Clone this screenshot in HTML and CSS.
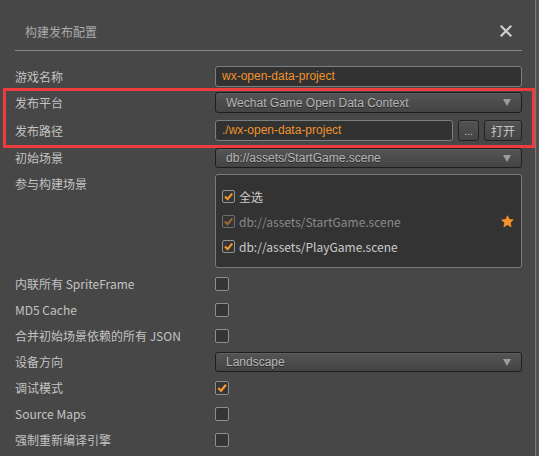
FILE: index.html
```html
<!DOCTYPE html>
<html lang="zh-CN">
<head>
<meta charset="utf-8">
<title>构建发布配置</title>
<link rel="stylesheet" href="styles.css">
</head>
<body>
<div class="window">
  <div class="titlebar">
    <span class="title">构建发布配置</span>
    <span class="close" aria-label="close">
      <svg width="12" height="12" viewBox="0 0 12 12"><path d="M1.5 1.5 L10.5 10.5 M10.5 1.5 L1.5 10.5" stroke="#cfcfcf" stroke-width="2.2" stroke-linecap="square"/></svg>
    </span>
  </div>
  <div class="sep"></div>

  <div class="form">
    <div class="row mt15">
      <span class="lbl">游戏名称</span>
      <div class="input">wx-open-data-project</div>
    </div>
    <div class="row mt5">
      <span class="lbl">发布平台</span>
      <div class="select"><span>Wechat Game Open Data Context</span><i class="arrow"></i></div>
    </div>
    <div class="row mt7">
      <span class="lbl">发布路径</span>
      <div class="pathctl">
        <div class="input grow">./wx-open-data-project</div>
        <div class="btn dots">...</div>
        <div class="btn open">打开</div>
      </div>
    </div>
    <div class="row mt7">
      <span class="lbl">初始场景</span>
      <div class="select h20"><span>db://assets/StartGame.scene</span><i class="arrow"></i></div>
    </div>
    <div class="row mt6 top">
      <span class="lbl lbl-top">参与构建场景</span>
      <div class="scenes">
        <div class="scene">
          <span class="cb"><svg width="11" height="11" viewBox="0 0 11 11"><polyline points="2,5.5 4.6,8.2 9.2,2.6" fill="none" stroke="#f3962c" stroke-width="2.2"/></svg></span>
          <span class="scene-name">全选</span>
        </div>
        <div class="scene dim">
          <span class="cb"><svg width="11" height="11" viewBox="0 0 11 11"><polyline points="2,5.5 4.6,8.2 9.2,2.6" fill="none" stroke="#9c6a33" stroke-width="2.2"/></svg></span>
          <span class="scene-name">db://assets/StartGame.scene</span>
          <svg class="star" width="13" height="13" viewBox="0 0 24 24"><polygon points="12,1.5 15.2,8.3 22.6,9.1 17.1,14.2 18.6,21.6 12,17.8 5.4,21.6 6.9,14.2 1.4,9.1 8.8,8.3" fill="#f6922a" stroke="#f6922a" stroke-width="1.5" stroke-linejoin="round"/></svg>
        </div>
        <div class="scene">
          <span class="cb"><svg width="11" height="11" viewBox="0 0 11 11"><polyline points="2,5.5 4.6,8.2 9.2,2.6" fill="none" stroke="#f3962c" stroke-width="2.2"/></svg></span>
          <span class="scene-name">db://assets/PlayGame.scene</span>
        </div>
      </div>
    </div>
    <div class="row crow mt3">
      <span class="lbl">内联所有 SpriteFrame</span>
      <span class="cb lg"></span>
    </div>
    <div class="row crow">
      <span class="lbl">MD5 Cache</span>
      <span class="cb lg"></span>
    </div>
    <div class="row crow">
      <span class="lbl">合并初始场景依赖的所有 JSON</span>
      <span class="cb lg"></span>
    </div>
    <div class="row mt3">
      <span class="lbl">设备方向</span>
      <div class="select h20"><span>Landscape</span><i class="arrow"></i></div>
    </div>
    <div class="row crow mt3">
      <span class="lbl">调试模式</span>
      <span class="cb lg"><svg width="12" height="12" viewBox="0 0 12 12"><polyline points="2.2,6 5,8.8 10,2.8" fill="none" stroke="#f3962c" stroke-width="2.3"/></svg></span>
    </div>
    <div class="row crow">
      <span class="lbl">Source Maps</span>
      <span class="cb lg"></span>
    </div>
    <div class="row crow">
      <span class="lbl">强制重新编译引擎</span>
      <span class="cb lg"></span>
    </div>
  </div>

  <div class="highlight"></div>
</div>
</body>
</html>
```

FILE: styles.css
```css
html, body {
  margin: 0;
  padding: 0;
}

body {
  width: 539px;
  height: 456px;
  overflow: hidden;
  background: #525252;
  font-family: "Noto Sans CJK SC", "Liberation Sans", sans-serif;
  font-size: 12px;
}

.window {
  position: relative;
  width: 535px;
  height: 456px;
  background: #474747;
  border-right: 1px solid #7a7a7a;
}

.titlebar {
  display: flex;
  justify-content: space-between;
  align-items: flex-start;
  height: 50px;
  box-sizing: border-box;
  padding: 24px 23px 0 25px;
}

.title {
  color: #ababab;
  line-height: 16px;
}

.close {
  display: block;
  width: 12px;
  height: 12px;
  margin-top: 1px;
}

.close svg {
  display: block;
}

.sep {
  height: 1px;
  background: #8a8a8a;
  margin: 0 13px 0 15px;
}

.form {
  padding-left: 15px;
}

.row {
  display: grid;
  grid-template-columns: 200px 307px;
  align-items: center;
}

.row.top {
  align-items: start;
}

.crow {
  height: 26px;
}

.mt15 { margin-top: 15px; }
.mt7 { margin-top: 7px; }
.mt6 { margin-top: 6px; }
.mt5 { margin-top: 5px; }
.mt3 { margin-top: 3px; }

.lbl {
  color: #c3c3c3;
  line-height: 16px;
  white-space: nowrap;
}

.lbl-top {
  margin-top: 2px;
}

.input {
  height: 21px;
  box-sizing: border-box;
  border: 1px solid #7e7e7e;
  border-radius: 3px;
  background: #323232;
  color: #f0932c;
  font-family: "Liberation Sans", "Noto Sans CJK SC", sans-serif;
  font-size: 12px;
  line-height: 19px;
  padding-left: 6px;
  white-space: nowrap;
}

.select {
  height: 21px;
  box-sizing: border-box;
  border: 1px solid #1e1e1e;
  border-radius: 3px;
  background: linear-gradient(#545454, #444444);
  box-shadow: inset 0 1px 0 #5e5e5e;
  color: #b6b6b6;
  text-shadow: 0 1px 0 #2a2a2a;
  font-family: "Liberation Sans", "Noto Sans CJK SC", sans-serif;
  font-size: 12px;
  display: flex;
  align-items: center;
  justify-content: space-between;
  padding: 0 10px 0 10px;
}

.select.h20 {
  height: 20px;
}

.arrow {
  display: block;
  width: 0;
  height: 0;
  border-left: 4px solid transparent;
  border-right: 4px solid transparent;
  border-top: 7px solid #9c9c9c;
}

.pathctl {
  display: flex;
  gap: 5px;
}

.grow {
  flex: 1;
}

.btn {
  height: 21px;
  box-sizing: border-box;
  border: 1px solid #222222;
  border-radius: 3px;
  background: linear-gradient(#535353, #444444);
  box-shadow: inset 0 1px 0 #5c5c5c;
  color: #c4c4c4;
  display: flex;
  align-items: center;
  justify-content: center;
}

.btn.dots {
  width: 21px;
  font-family: "Liberation Sans", sans-serif;
  font-size: 11px;
  line-height: 11px;
  padding-top: 2px;
  box-sizing: border-box;
}

.btn.open {
  width: 38px;
}

.scenes {
  height: 94px;
  box-sizing: border-box;
  border: 1px solid #7a7a7a;
  border-radius: 3px;
  background: #333333;
  padding: 9px 7px 0 6px;
}

.scene {
  display: flex;
  align-items: center;
  gap: 4px;
  height: 25px;
  color: #cbcbcb;
}

.scene.dim {
  color: #8a8a8a;
}

.scene.dim .cb {
  border-color: #6e6e6e;
}

.star {
  margin-left: auto;
  display: block;
}

.cb {
  display: flex;
  align-items: center;
  justify-content: center;
  width: 13px;
  height: 13px;
  box-sizing: border-box;
  border: 1px solid #939393;
  border-radius: 2px;
  background: #353535;
}

.cb.lg {
  width: 14px;
  height: 14px;
  border-color: #8e8e8e;
}

.cb svg {
  display: block;
}

.scene-name {
  line-height: 16px;
  white-space: nowrap;
}

.highlight {
  position: absolute;
  left: 3px;
  top: 88px;
  width: 532px;
  height: 60px;
  box-sizing: border-box;
  border: 3px solid #ef3b3b;
  pointer-events: none;
}
```
